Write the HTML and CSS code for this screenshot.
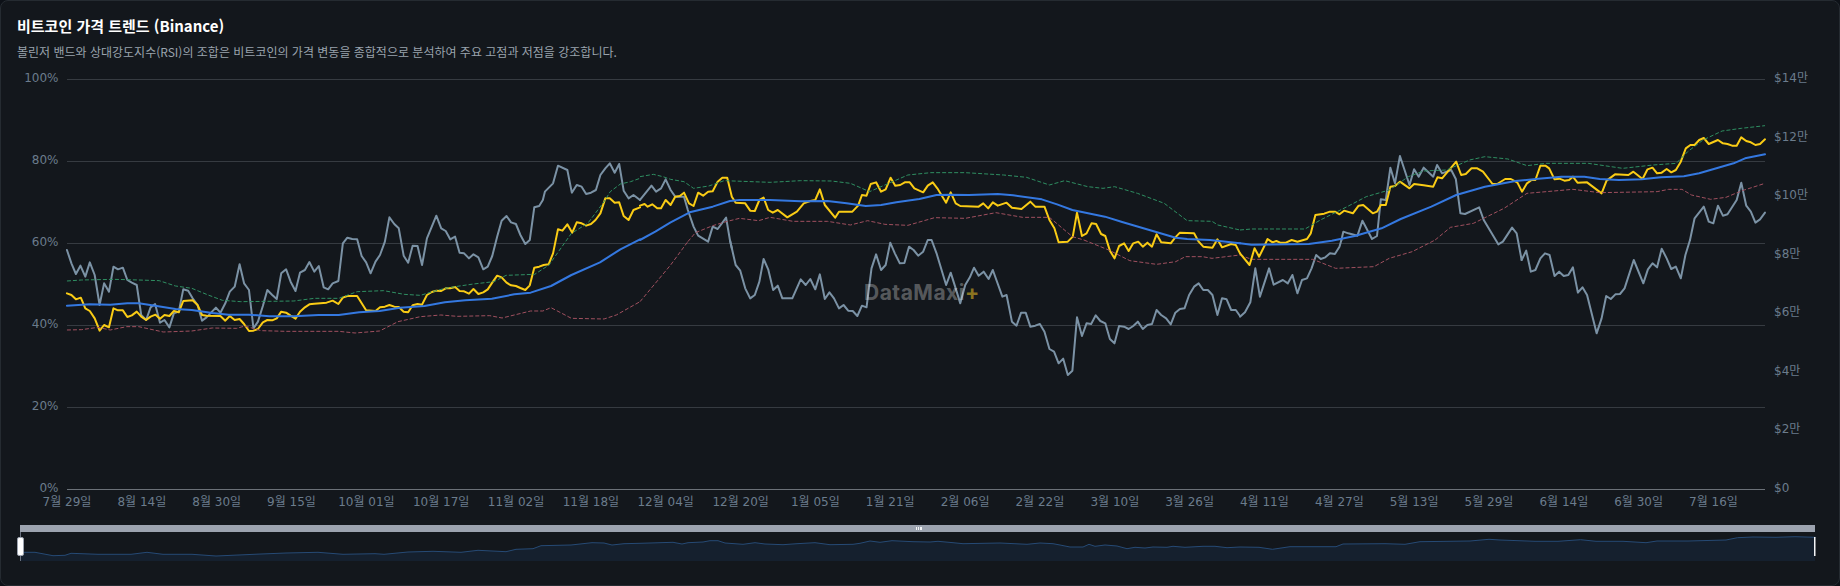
FILE: index.html
```html
<!DOCTYPE html>
<html lang="ko">
<head>
    <meta charset="UTF-8">
    <meta name="viewport" content="width=device-width, initial-scale=1.0">
    <title>비트코인 가격 트렌드 (Binance)</title>
    <link rel="stylesheet" href="styles.css">
</head>
<body>

<div class="card">
    <div class="card-header">
        <h2>비트코인 가격 트렌드 (Binance)</h2>
        <p>볼린저 밴드와 상대강도지수(RSI)의 조합은 비트코인의 가격 변동을 종합적으로 분석하여 주요 고점과 저점을 강조합니다.</p>
    </div>

    <svg class="chart" viewBox="1 69 1838 516" width="1838" height="516">
        <!-- grid -->
        <g class="grid">
            <line x1="67" y1="79.5" x2="1765" y2="79.5"/>
            <line x1="67" y1="161.5" x2="1765" y2="161.5"/>
            <line x1="67" y1="243.5" x2="1765" y2="243.5"/>
            <line x1="67" y1="325.5" x2="1765" y2="325.5"/>
            <line x1="67" y1="407.5" x2="1765" y2="407.5"/>
        </g>
        <line class="axis" x1="67" y1="489.5" x2="1765" y2="489.5"/>

        <!-- left axis -->
        <g class="labels end">
            <text x="58.5" y="82">100%</text>
            <text x="58.5" y="164">80%</text>
            <text x="58.5" y="246">60%</text>
            <text x="58.5" y="328">40%</text>
            <text x="58.5" y="410">20%</text>
            <text x="58.5" y="492">0%</text>
        </g>

        <!-- right axis -->
        <g class="labels">
            <text x="1774" y="82">$14만</text>
            <text x="1774" y="141">$12만</text>
            <text x="1774" y="199">$10만</text>
            <text x="1774" y="257.5">$8만</text>
            <text x="1774" y="316">$6만</text>
            <text x="1774" y="374.5">$4만</text>
            <text x="1774" y="433">$2만</text>
            <text x="1774" y="491.5">$0</text>
        </g>

        <!-- date axis -->
        <g class="labels middle">
            <text x="67" y="506">7월 29일</text>
            <text x="141.8" y="506">8월 14일</text>
            <text x="216.7" y="506">8월 30일</text>
            <text x="291.5" y="506">9월 15일</text>
            <text x="366.4" y="506">10월 01일</text>
            <text x="441.2" y="506">10월 17일</text>
            <text x="516" y="506">11월 02일</text>
            <text x="590.9" y="506">11월 18일</text>
            <text x="665.7" y="506">12월 04일</text>
            <text x="740.6" y="506">12월 20일</text>
            <text x="815.4" y="506">1월 05일</text>
            <text x="890.2" y="506">1월 21일</text>
            <text x="965.1" y="506">2월 06일</text>
            <text x="1039.9" y="506">2월 22일</text>
            <text x="1114.8" y="506">3월 10일</text>
            <text x="1189.6" y="506">3월 26일</text>
            <text x="1264.4" y="506">4월 11일</text>
            <text x="1339.3" y="506">4월 27일</text>
            <text x="1414.1" y="506">5월 13일</text>
            <text x="1489" y="506">5월 29일</text>
            <text x="1563.8" y="506">6월 14일</text>
            <text x="1638.6" y="506">6월 30일</text>
            <text x="1713.5" y="506">7월 16일</text>
        </g>

        <!-- series, traced in five scaled pieces -->
        <g transform="translate(0,200) scale(.40816,.33333)">
            <polyline class="rsi" points="164,150 175,190 186,222 197,197 209,230 220,187 232,225 244,315 255,250 267,275 278,200 289,208 301,203 312,240 323,248 335,255 346,345 358,360 369,322 380,312 392,368 403,360 415,382 426,340 438,335 449,268 461,272 472,295 484,315 495,362 506,352 517,338 529,323 540,338 552,310 563,275 575,260 587,193 598,250 610,270 621,385 632,365 644,318 655,270 667,285 678,297 689,220 701,208 712,245 724,273 735,218 747,210 758,186 770,215 781,198 793,262 804,268 815,250 829,243 840,130 851,113 863,117 875,118 886,168 897,187 908,220 920,185 931,165 943,125 954,52 966,72 977,85 989,167 1000,188 1011,137 1023,138 1034,195 1046,115 1069,47 1081,85 1092,93 1103,118 1115,110 1126,158 1137,160 1149,175 1160,163 1172,172 1184,208 1195,200 1206,168 1218,110 1229,62 1241,48 1252,67 1264,72 1275,105 1287,132 1298,120 1309,22 1321,18 1330,0 1335,-25 1355,-50 1367,-103 1390,-90 1401,-22 1413,-45 1425,-40 1436,-18 1448,-22 1460,-30 1471,-75 1483,-95 1494,-110 1506,-82 1517,-108 1528,-28 1540,-5 1552,-15 1568,0"/>
            <polyline class="price" points="164,280 175,285 186,298 198,293 209,325 220,333 232,355 244,392 255,375 267,382 278,325 289,331 301,331 312,351 323,346 335,335 346,350 358,360 369,350 381,344 392,356 403,345 415,348 426,333 438,337 449,303 472,301 484,315 495,345 506,347 540,348 552,362 563,348 575,360 587,357 598,372 610,393 621,392 632,387 644,367 655,360 667,361 678,355 689,335 701,338 712,347 724,356 735,335 747,322 758,313 770,311 800,308 815,302 829,312 840,293 851,288 875,288 897,331 920,333 931,322 943,320 954,315 966,320 977,321 989,335 1000,337 1011,316 1023,312 1034,314 1046,285 1058,276 1069,272 1081,273 1092,265 1103,265 1115,261 1126,273 1137,274 1149,281 1160,267 1172,282 1184,277 1195,268 1206,248 1218,227 1229,232 1241,248 1252,256 1264,258 1275,264 1287,270 1298,256 1309,203 1321,200 1332,195 1344,193 1355,160 1367,88 1378,92 1390,73 1402,98 1413,67 1425,70 1436,77 1448,72 1459,60 1471,40 1483,-5 1494,-5 1506,8 1517,7 1528,48 1540,60 1552,30 1568,22"/>
            <polyline class="lower" points="164,390 200,389 240,382 270,390 310,380 340,380 400,396 470,393 520,384 580,385 600,378 640,392 700,394 830,394 870,399 930,393 975,365 1030,350 1080,345 1120,349 1200,347 1230,354 1300,333 1330,333 1350,323 1400,355 1480,357 1510,345 1568,305"/>
            <polyline class="upper" points="164,243 200,240 280,238 340,240 390,242 430,258 470,265 510,285 545,301 590,305 720,303 770,295 830,295 875,275 940,272 990,283 1030,286 1060,275 1090,265 1115,260 1160,252 1210,245 1240,226 1310,223 1345,195 1400,100 1440,70 1480,5 1495,-25 1520,-48 1545,-55 1568,-65"/>
            <polyline class="sma" points="164,317 220,313 270,314 312,310 340,310 380,317 430,327 470,330 520,339 560,344 610,344 660,349 720,349 780,345 830,345 880,337 930,333 980,323 1040,318 1090,307 1140,301 1205,296 1260,283 1300,278 1350,258 1400,225 1470,187 1520,148 1568,118"/>
        </g>

        <g transform="translate(640,60) scale(.38265,.33333)">
            <polyline class="rsi" points="0,420 30,377 42,395 55,385 67,358 80,390 92,410 115,410 125,450 140,500 152,527 178,545 190,500 203,507 225,473 235,540 240,565"/>
            <polyline class="price" points="0,437 12,432 20,440 32,433 45,445 55,445 67,420 80,435 92,410 104,408 115,398 128,430 140,438 152,398 165,407 178,395 190,394 203,365 215,353 228,353 240,410 250,428 275,430 288,452 300,453 312,420 323,413 335,450 347,458 360,450 385,472 410,455 428,430 445,423 458,420 470,388 483,435 510,473 520,455 555,455 570,437 580,405 592,407 603,372 617,367 630,395 642,388 655,353 667,377 680,375 692,367 705,367 717,385 740,397 752,377 765,367 777,385 800,428 812,397 825,430 837,438 885,440 897,430 910,445 922,427 935,437 958,428 972,443 997,447 1020,425 1033,440 1057,440 1070,480 1083,505 1094,547 1118,545 1131,530 1142,458 1155,528 1167,520 1180,490 1192,492 1205,522 1216,528 1228,572 1240,595 1252,558 1265,550 1277,573 1289,550 1302,545 1314,560 1326,548 1338,560 1350,523 1362,547 1387,550 1399,532 1411,518 1448,520 1460,545 1472,560 1496,563 1509,538 1521,562 1545,552 1557,555 1568,580"/>
            <polyline class="lower" points="125,545 145,518 190,497 225,485 260,475 310,482 340,472 400,484 490,484 550,495 595,482 640,493 700,496 770,473 850,475 930,458 1000,472 1070,472 1130,530 1160,540"/>
            <polyline class="upper" points="0,350 35,343 60,350 80,358 115,365 140,385 180,378 220,362 340,367 420,362 500,363 550,370 600,395 640,375 700,345 760,338 850,338 950,345 1010,352 1070,375 1110,362 1170,380 1210,385 1240,380 1300,400 1370,430 1430,482 1495,484 1510,495 1568,510"/>
            <polyline class="sma" points="0,540 40,515 80,487 130,457 190,440 235,423 260,420 340,420 420,424 490,423 540,430 590,438 630,435 670,427 730,417 775,405 810,404 860,405 935,402 975,406 1050,418 1090,433 1130,450 1215,470 1260,486 1340,513 1400,533 1430,537 1490,540 1568,550"/>
        </g>

        <g transform="translate(640,240) scale(.38265,.33333)">
            <polyline class="rsi" points="235,0 240,25 250,75 262,92 275,145 288,175 300,165 312,125 323,57 335,88 348,150 360,137 372,175 398,175 420,118 433,135 445,117 458,148 470,103 483,177 495,157 507,175 520,205 532,195 544,212 556,213 568,228 580,197 592,202 605,85 617,43 630,90 642,75 654,8 666,40 679,70 691,69 703,20 715,30 727,47 740,35 752,0 762,0 775,40 800,135 812,98 825,145 837,190 850,135 862,112 873,83 885,107 898,95 911,117 922,90 947,170 958,165 972,245 984,257 996,218 1008,218 1020,260 1033,257 1045,252 1057,275 1070,327 1082,335 1094,370 1106,356 1118,405 1130,392 1142,232 1155,288 1167,250 1179,252 1191,226 1203,243 1216,250 1228,297 1240,310 1252,258 1265,260 1277,267 1289,258 1301,245 1314,267 1326,255 1338,252 1350,210 1362,225 1375,235 1387,253 1399,218 1411,207 1423,205 1435,165 1448,140 1460,130 1472,150 1484,150 1496,165 1509,225 1521,175 1533,178 1545,210 1557,210 1568,228"/>
            <polyline class="lower" points="0,185 40,130 80,75 125,5"/>
            <polyline class="lower" points="1160,0 1225,30 1280,62 1350,73 1400,65 1425,50 1470,50 1495,55 1568,45"/>
        </g>

        <g transform="translate(1240,240) scale(.38265,.33333)">
            <polyline class="rsi" points="0,230 13,217 27,187 40,85 52,170 76,85 88,134 112,120 125,130 137,105 150,160 162,120 175,115 187,85 199,45 211,57 223,52 235,40 248,42 260,20 265,0"/>
            <polyline class="rsi" points="736,60 748,32 760,95 772,90 785,55 797,40 809,45 822,108 834,95 846,108 858,105 870,82 883,158 895,142 907,165 932,280 945,235 957,168 969,177 981,163 993,162 1005,145 1029,60 1054,130 1066,88 1078,70 1090,82 1102,26 1115,55 1127,87 1139,80 1152,115 1164,45 1176,0"/>
            <polyline class="lower" points="0,45 30,58 190,58 250,85 350,80 390,55 450,35 510,0"/>
        </g>

        <g transform="translate(1240,60) scale(.38265,.33333)">
            <polyline class="rsi" points="265,540 270,515 283,520 307,527 320,482 345,537 358,528 368,418 381,420 393,323 405,370 418,288 443,375 455,328 467,350 480,323 505,350 515,315 528,340 552,330 564,357 576,460 588,462 625,442 637,480 675,553 687,545 711,503 723,520 736,600"/>
            <polyline class="rsi" points="1176,540 1188,475 1212,440 1225,485 1237,490 1249,437 1262,467 1274,463 1298,420 1310,368 1323,437 1335,455 1347,488 1359,478 1372,458"/>
            <polyline class="price" points="0,580 25,615 38,565 50,590 65,555 72,537 85,547 95,543 105,548 120,548 135,540 150,545 175,537 185,520 197,465 220,461 235,455 248,455 260,463 272,452 295,460 310,437 322,435 347,460 358,455 368,435 381,435 393,380 405,378 418,365 443,385 455,372 480,376 505,380 516,352 528,355 565,305 578,345 590,342 605,325 620,325 635,335 660,372 672,372 693,357 708,357 725,368 737,395 750,370 762,360 772,360 785,317 798,317 808,325 822,358 835,356 848,362 860,360 870,350 882,368 907,367 945,400 958,362 980,343 1015,345 1028,335 1052,357 1065,328 1078,323 1090,340 1102,338 1115,327 1127,337 1139,330 1152,305 1165,265 1177,255 1188,255 1200,240 1212,234 1225,252 1249,240 1262,250 1274,252 1286,257 1298,257 1310,232 1323,243 1335,247 1347,255 1359,252 1372,238"/>
            <polyline class="lower" points="510,540 550,502 610,490 690,445 750,400 870,388 940,398 1090,395 1120,388 1155,388 1180,405 1230,418 1270,412 1310,393 1372,370"/>
            <polyline class="upper" points="0,510 30,507 170,507 210,480 280,440 330,410 390,390 440,350 480,333 540,330 600,300 640,290 700,297 750,317 800,310 910,310 1000,325 1080,315 1140,310 1170,275 1210,240 1260,213 1310,205 1372,197"/>
            <polyline class="sma" points="0,550 30,554 180,552 240,542 300,528 370,505 420,477 500,440 565,405 640,380 720,363 780,356 840,350 900,350 940,357 990,360 1050,358 1100,352 1160,349 1200,340 1290,310 1320,295 1372,283"/>
        </g>

        <!-- watermark -->
        <text class="watermark" x="864" y="300">DataMaxi<tspan class="watermark-plus">+</tspan></text>

        <!-- range slider -->
        <rect class="slider-bar" x="20" y="525" width="1795" height="7"/>
        <polygon class="mini-area" points="20,552.3 35,552.3 53,555.7 65,555.3 71,553.3 98,554.3 131,554.3 147,552.3 163,554.3 192,554.3 216,556 261,554 286,553 318,552.3 343,554.3 375,553.7 384,554.3 408,552 433,551.3 461,552.3 478,550.3 506,551.7 516,549.3 533,548.7 541,545.7 571,545 592,542.7 604,543 612,545 624,543.7 640,543.3 650,543 660,542.7 673,542.3 682,544 688,542.7 703,542 710,540.7 718,540.7 725,543 743,544.3 755,542.7 765,544 783,544.7 797,543.7 815,542.7 830,544.7 853,544.3 860,543.3 870,541 880,542.3 892,540.7 913,541.7 930,542 938,541.3 953,542.7 963,543.7 1000,543 1027,544.3 1040,543 1053,543.7 1060,545 1070,547 1083,547 1089,544.3 1095,546.3 1105,545 1117,546 1127,548.7 1135,547.3 1145,548 1153,547 1167,547.3 1173,546.3 1185,547.3 1203,546.3 1215,546.3 1227,547.7 1240,547 1259,547.3 1272.5,549.3 1290,546.7 1336,546.7 1343,544 1385,543.7 1405,544.3 1420,541.7 1470,541 1489,539.3 1500,540 1535,541.3 1558,541.3 1580.6,539.7 1596,541.3 1623,541.3 1646,542.7 1657,541 1688,541 1726,540 1737.5,537.7 1753,537 1776,537.3 1795,536.7 1815,537.3 1815,561 20,561"/>
        <polyline class="mini-line" points="20,552.3 35,552.3 53,555.7 65,555.3 71,553.3 98,554.3 131,554.3 147,552.3 163,554.3 192,554.3 216,556 261,554 286,553 318,552.3 343,554.3 375,553.7 384,554.3 408,552 433,551.3 461,552.3 478,550.3 506,551.7 516,549.3 533,548.7 541,545.7 571,545 592,542.7 604,543 612,545 624,543.7 640,543.3 650,543 660,542.7 673,542.3 682,544 688,542.7 703,542 710,540.7 718,540.7 725,543 743,544.3 755,542.7 765,544 783,544.7 797,543.7 815,542.7 830,544.7 853,544.3 860,543.3 870,541 880,542.3 892,540.7 913,541.7 930,542 938,541.3 953,542.7 963,543.7 1000,543 1027,544.3 1040,543 1053,543.7 1060,545 1070,547 1083,547 1089,544.3 1095,546.3 1105,545 1117,546 1127,548.7 1135,547.3 1145,548 1153,547 1167,547.3 1173,546.3 1185,547.3 1203,546.3 1215,546.3 1227,547.7 1240,547 1259,547.3 1272.5,549.3 1290,546.7 1336,546.7 1343,544 1385,543.7 1405,544.3 1420,541.7 1470,541 1489,539.3 1500,540 1535,541.3 1558,541.3 1580.6,539.7 1596,541.3 1623,541.3 1646,542.7 1657,541 1688,541 1726,540 1737.5,537.7 1753,537 1776,537.3 1795,536.7 1815,537.3"/>
        <line class="slider-stem" x1="20.5" y1="532" x2="20.5" y2="561"/>
        <rect class="slider-handle" x="17.5" y="537.5" width="6" height="18" rx="1.5"/>
        <rect class="slider-handle-end" x="1814" y="537" width="1.5" height="19"/>
        <rect class="slider-grip" x="916" y="527" width="1" height="3"/>
        <rect class="slider-grip" x="918" y="527" width="1" height="3"/>
        <rect class="slider-grip" x="920" y="527" width="2" height="3"/>
    </svg>
</div>

</body>
</html>
```

FILE: styles.css
```css
html, body {
    margin: 0;
    background-color: #0d1117;
}
.card {
    box-sizing: border-box;
    width: 1840px;
    height: 586px;
    background-color: #13171c;
    border: 1px solid #252b31;
    border-radius: 8px;
    overflow: hidden;
}
.card-header {
    box-sizing: border-box;
    height: 68px;
    padding: 16px 16px 0;
    font-family: "Noto Sans CJK KR", "Noto Sans", sans-serif;
}
.card-header h2 {
    margin: 0;
    font-size: 15px;
    line-height: 18px;
    font-weight: 700;
    color: #ffffff;
}
.card-header p {
    margin: 8px 0 0;
    font-size: 12px;
    line-height: 18px;
    color: #9aa3ad;
}
.chart {
    display: block;
}
.grid line {
    stroke: #363b41;
    stroke-width: 1;
}
.axis {
    stroke: #6b7178;
    stroke-width: 1;
}
.labels text {
    font-family: "DejaVu Sans", "Noto Sans CJK KR", sans-serif;
    font-size: 12px;
    fill: #6b7c8c;
}
.labels.end text {
    text-anchor: end;
}
.labels.middle text {
    text-anchor: middle;
}
polyline {
    fill: none;
    vector-effect: non-scaling-stroke;
    stroke-linejoin: round;
    stroke-linecap: round;
}
.rsi {
    stroke: #7b92a5;
    stroke-width: 2;
}
.price {
    stroke: #facc15;
    stroke-width: 2;
}
.sma {
    stroke: #3478e0;
    stroke-width: 2;
}
.upper {
    stroke: #2f8f62;
    stroke-width: 1;
    stroke-dasharray: 4 2;
    stroke-linecap: butt;
}
.lower {
    stroke: #a0505f;
    stroke-width: 1;
    stroke-dasharray: 4 2;
    stroke-linecap: butt;
}
.watermark {
    font-family: Inter, "Noto Sans", sans-serif;
    font-size: 21px;
    font-weight: 700;
    letter-spacing: 0.5px;
    fill: rgba(255, 255, 255, 0.3);
}
.watermark-plus {
    fill: #8a7320;
}
.slider-bar {
    fill: #9ca3af;
}
.mini-area {
    fill: #15202e;
}
.mini-line {
    stroke: #264a75;
    stroke-width: 1;
}
.slider-stem {
    stroke: #6b7280;
    stroke-width: 1;
}
.slider-handle {
    fill: #ffffff;
    stroke: #9ca3af;
    stroke-width: 1;
}
.slider-handle-end,
.slider-grip {
    fill: #f3f4f6;
}
```
